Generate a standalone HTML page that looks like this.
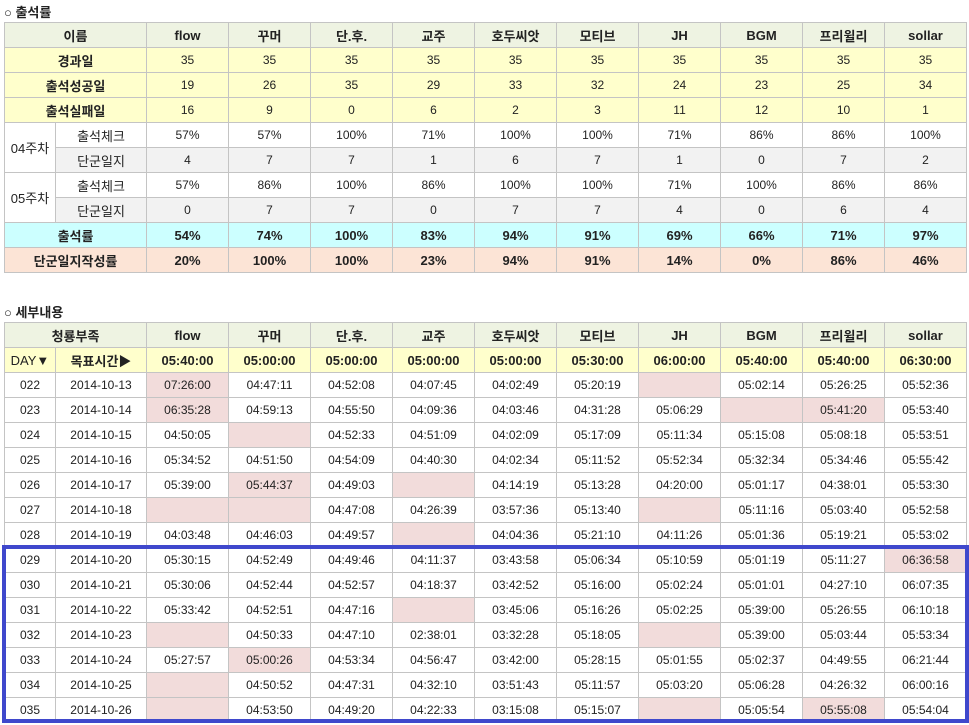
<!DOCTYPE html>
<html><head><meta charset="utf-8"><style>
body{margin:0;background:#fff;width:969px;height:725px;overflow:hidden;position:relative;font-family:"Liberation Sans","Noto Sans CJK KR",sans-serif;color:#222}
.t{position:absolute;left:4px;font-size:13px;font-weight:bold}
table{position:absolute;left:4px;border-collapse:collapse;table-layout:fixed;width:962px}
td{border:1px solid #c4c4c4;height:24px;padding:0;text-align:center;font-size:12px;white-space:nowrap;overflow:hidden}
.h td{background:#eef3e2;font-weight:bold;font-size:13px}
.y td{background:#ffffcc}
.y td.l,.b{font-weight:bold;font-size:13px}
.g td{background:#f2f2f2}
.w{background:#fff!important}
.c td{background:#ccffff;font-weight:bold;font-size:13px}
.p td{background:#fce4d6;font-weight:bold;font-size:13px}
.d td{background:#ffffcc;font-weight:bold;font-size:13px}
td.k{background:#f2dcdb}
#box{position:absolute;left:2px;top:545px;width:959px;height:170px;border:4px solid #3f48cc}
</style></head><body>
<div class="t" style="top:2px">○ 출석률</div>
<table style="top:22px">
<colgroup><col style="width:51px"><col style="width:91px"><col span="10" style="width:82px"></colgroup>
<tr class="h"><td colspan="2">이름</td><td>flow</td><td>꾸머</td><td>단.후.</td><td>교주</td><td>호두씨앗</td><td>모티브</td><td>JH</td><td>BGM</td><td>프리윌리</td><td>sollar</td></tr>
<tr class="y"><td colspan="2" class="l">경과일</td><td>35</td><td>35</td><td>35</td><td>35</td><td>35</td><td>35</td><td>35</td><td>35</td><td>35</td><td>35</td></tr>
<tr class="y"><td colspan="2" class="l">출석성공일</td><td>19</td><td>26</td><td>35</td><td>29</td><td>33</td><td>32</td><td>24</td><td>23</td><td>25</td><td>34</td></tr>
<tr class="y"><td colspan="2" class="l">출석실패일</td><td>16</td><td>9</td><td>0</td><td>6</td><td>2</td><td>3</td><td>11</td><td>12</td><td>10</td><td>1</td></tr>
<tr><td rowspan="2" style="font-size:13px">04주차</td><td style="font-size:13px">출석체크</td><td>57%</td><td>57%</td><td>100%</td><td>71%</td><td>100%</td><td>100%</td><td>71%</td><td>86%</td><td>86%</td><td>100%</td></tr>
<tr class="g"><td style="font-size:13px">단군일지</td><td>4</td><td>7</td><td>7</td><td>1</td><td>6</td><td>7</td><td>1</td><td>0</td><td>7</td><td>2</td></tr>
<tr><td rowspan="2" style="font-size:13px">05주차</td><td style="font-size:13px">출석체크</td><td>57%</td><td>86%</td><td>100%</td><td>86%</td><td>100%</td><td>100%</td><td>71%</td><td>100%</td><td>86%</td><td>86%</td></tr>
<tr class="g"><td style="font-size:13px">단군일지</td><td>0</td><td>7</td><td>7</td><td>0</td><td>7</td><td>7</td><td>4</td><td>0</td><td>6</td><td>4</td></tr>
<tr class="c"><td colspan="2">출석률</td><td>54%</td><td>74%</td><td>100%</td><td>83%</td><td>94%</td><td>91%</td><td>69%</td><td>66%</td><td>71%</td><td>97%</td></tr>
<tr class="p"><td colspan="2">단군일지작성률</td><td>20%</td><td>100%</td><td>100%</td><td>23%</td><td>94%</td><td>91%</td><td>14%</td><td>0%</td><td>86%</td><td>46%</td></tr>
</table>
<div class="t" style="top:302px">○ 세부내용</div>
<table style="top:322px">
<colgroup><col style="width:51px"><col style="width:91px"><col span="10" style="width:82px"></colgroup>
<tr class="h"><td colspan="2">청룡부족</td><td>flow</td><td>꾸머</td><td>단.후.</td><td>교주</td><td>호두씨앗</td><td>모티브</td><td>JH</td><td>BGM</td><td>프리윌리</td><td>sollar</td></tr>
<tr class="d"><td style="font-weight:normal">DAY▼</td><td>목표시간▶</td><td>05:40:00</td><td>05:00:00</td><td>05:00:00</td><td>05:00:00</td><td>05:00:00</td><td>05:30:00</td><td>06:00:00</td><td>05:40:00</td><td>05:40:00</td><td>06:30:00</td></tr>
<tr><td>022</td><td>2014-10-13</td><td class="k">07:26:00</td><td>04:47:11</td><td>04:52:08</td><td>04:07:45</td><td>04:02:49</td><td>05:20:19</td><td class="k"></td><td>05:02:14</td><td>05:26:25</td><td>05:52:36</td></tr>
<tr><td>023</td><td>2014-10-14</td><td class="k">06:35:28</td><td>04:59:13</td><td>04:55:50</td><td>04:09:36</td><td>04:03:46</td><td>04:31:28</td><td>05:06:29</td><td class="k"></td><td class="k">05:41:20</td><td>05:53:40</td></tr>
<tr><td>024</td><td>2014-10-15</td><td>04:50:05</td><td class="k"></td><td>04:52:33</td><td>04:51:09</td><td>04:02:09</td><td>05:17:09</td><td>05:11:34</td><td>05:15:08</td><td>05:08:18</td><td>05:53:51</td></tr>
<tr><td>025</td><td>2014-10-16</td><td>05:34:52</td><td>04:51:50</td><td>04:54:09</td><td>04:40:30</td><td>04:02:34</td><td>05:11:52</td><td>05:52:34</td><td>05:32:34</td><td>05:34:46</td><td>05:55:42</td></tr>
<tr><td>026</td><td>2014-10-17</td><td>05:39:00</td><td class="k">05:44:37</td><td>04:49:03</td><td class="k"></td><td>04:14:19</td><td>05:13:28</td><td>04:20:00</td><td>05:01:17</td><td>04:38:01</td><td>05:53:30</td></tr>
<tr><td>027</td><td>2014-10-18</td><td class="k"></td><td class="k"></td><td>04:47:08</td><td>04:26:39</td><td>03:57:36</td><td>05:13:40</td><td class="k"></td><td>05:11:16</td><td>05:03:40</td><td>05:52:58</td></tr>
<tr><td>028</td><td>2014-10-19</td><td>04:03:48</td><td>04:46:03</td><td>04:49:57</td><td class="k"></td><td>04:04:36</td><td>05:21:10</td><td>04:11:26</td><td>05:01:36</td><td>05:19:21</td><td>05:53:02</td></tr>
<tr><td>029</td><td>2014-10-20</td><td>05:30:15</td><td>04:52:49</td><td>04:49:46</td><td>04:11:37</td><td>03:43:58</td><td>05:06:34</td><td>05:10:59</td><td>05:01:19</td><td>05:11:27</td><td class="k">06:36:58</td></tr>
<tr><td>030</td><td>2014-10-21</td><td>05:30:06</td><td>04:52:44</td><td>04:52:57</td><td>04:18:37</td><td>03:42:52</td><td>05:16:00</td><td>05:02:24</td><td>05:01:01</td><td>04:27:10</td><td>06:07:35</td></tr>
<tr><td>031</td><td>2014-10-22</td><td>05:33:42</td><td>04:52:51</td><td>04:47:16</td><td class="k"></td><td>03:45:06</td><td>05:16:26</td><td>05:02:25</td><td>05:39:00</td><td>05:26:55</td><td>06:10:18</td></tr>
<tr><td>032</td><td>2014-10-23</td><td class="k"></td><td>04:50:33</td><td>04:47:10</td><td>02:38:01</td><td>03:32:28</td><td>05:18:05</td><td class="k"></td><td>05:39:00</td><td>05:03:44</td><td>05:53:34</td></tr>
<tr><td>033</td><td>2014-10-24</td><td>05:27:57</td><td class="k">05:00:26</td><td>04:53:34</td><td>04:56:47</td><td>03:42:00</td><td>05:28:15</td><td>05:01:55</td><td>05:02:37</td><td>04:49:55</td><td>06:21:44</td></tr>
<tr><td>034</td><td>2014-10-25</td><td class="k"></td><td>04:50:52</td><td>04:47:31</td><td>04:32:10</td><td>03:51:43</td><td>05:11:57</td><td>05:03:20</td><td>05:06:28</td><td>04:26:32</td><td>06:00:16</td></tr>
<tr><td>035</td><td>2014-10-26</td><td class="k"></td><td>04:53:50</td><td>04:49:20</td><td>04:22:33</td><td>03:15:08</td><td>05:15:07</td><td class="k"></td><td>05:05:54</td><td class="k">05:55:08</td><td>05:54:04</td></tr>
</table>
<div id="box"></div>
</body></html>
